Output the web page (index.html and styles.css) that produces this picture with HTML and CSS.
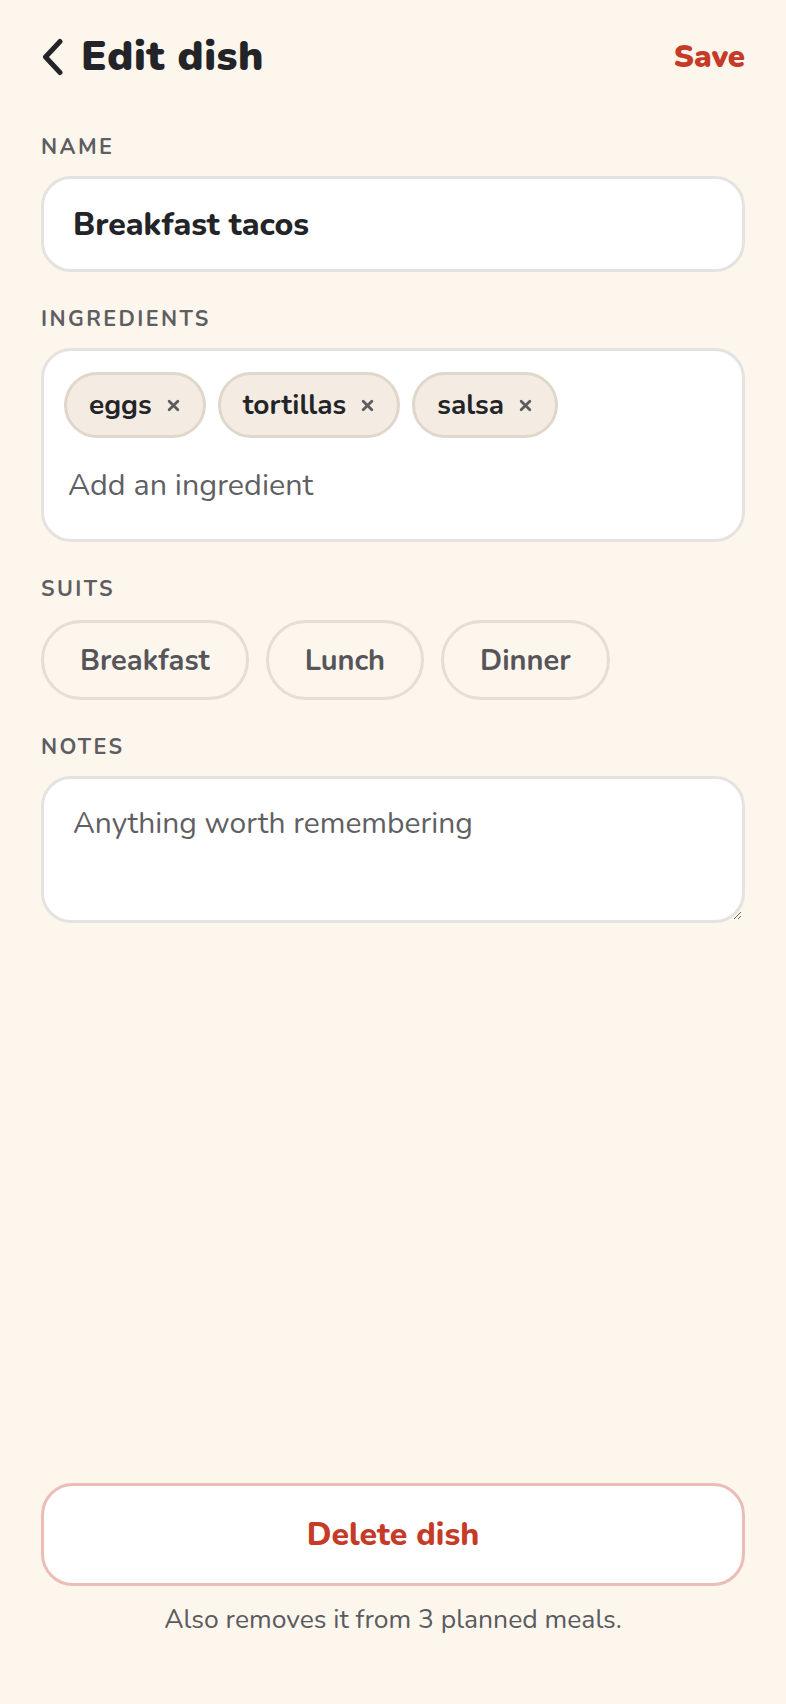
FILE: index.html
```html
<!DOCTYPE html>
<html lang="en">
<head>
<meta charset="utf-8">
<title>Edit dish</title>
<link rel="stylesheet" href="styles.css">
</head>
<body>
<div class="page">
  <header class="topbar">
    <div class="title-wrap">
      <svg class="back" width="24" height="38" viewBox="0 0 24 38" aria-hidden="true">
        <polyline points="19,3.5 4.5,19 19,34.5" fill="none" stroke="#232427" stroke-width="5" stroke-linecap="round" stroke-linejoin="round"/>
      </svg>
      <h1 class="title">Edit dish</h1>
    </div>
    <button class="save">Save</button>
  </header>

  <section class="group">
    <div class="label">NAME</div>
    <input class="text-input" type="text" value="Breakfast tacos">
  </section>

  <section class="group">
    <div class="label">INGREDIENTS</div>
    <div class="ing-box">
      <div class="chips">
        <span class="chip">eggs<svg class="x" viewBox="0 0 12 12"><path d="M2 2L10 10M10 2L2 10" stroke="#5b5b60" stroke-width="2.6" stroke-linecap="round"/></svg></span>
        <span class="chip">tortillas<svg class="x" viewBox="0 0 12 12"><path d="M2 2L10 10M10 2L2 10" stroke="#5b5b60" stroke-width="2.6" stroke-linecap="round"/></svg></span>
        <span class="chip">salsa<svg class="x" viewBox="0 0 12 12"><path d="M2 2L10 10M10 2L2 10" stroke="#5b5b60" stroke-width="2.6" stroke-linecap="round"/></svg></span>
      </div>
      <input class="ing-input" type="text" placeholder="Add an ingredient">
    </div>
  </section>

  <section class="group">
    <div class="label">SUITS</div>
    <div class="suits">
      <button class="suit">Breakfast</button>
      <button class="suit">Lunch</button>
      <button class="suit">Dinner</button>
    </div>
  </section>

  <section class="group">
    <div class="label">NOTES</div>
    <textarea class="notes" placeholder="Anything worth remembering"></textarea>
  </section>

  <div class="spacer"></div>

  <footer class="danger">
    <button class="delete">Delete dish</button>
    <p class="footnote">Also removes it from 3 planned meals.</p>
  </footer>
</div>
</body>
</html>
```

FILE: styles.css
```css
* { box-sizing: border-box; }

html, body {
  margin: 0;
  padding: 0;
  background: #fdf6ed;
}

body {
  font-family: "Nunito", "Lato", "Noto Sans", sans-serif;
  color: #232427;
}

.page {
  min-height: 1704px;
  padding: 0 41px 69px;
  display: flex;
  flex-direction: column;
}

.topbar {
  height: 112px;
  display: flex;
  align-items: center;
  justify-content: space-between;
  padding-top: 2px;
}

.title-wrap {
  display: flex;
  align-items: center;
  gap: 16px;
}

.back {
  display: block;
}

.title {
  margin: 0;
  font-size: 42px;
  font-weight: 900;
  letter-spacing: 0.6px;
  line-height: 1;
  color: #232427;
}

.save {
  border: 0;
  background: none;
  padding: 0;
  font-family: inherit;
  font-size: 31px;
  font-weight: 900;
  color: #c63b27;
}

.group {
  display: flex;
  flex-direction: column;
  margin-bottom: 35px;
}

.label {
  font-size: 21.5px;
  line-height: 24px;
  font-weight: 700;
  letter-spacing: 2.4px;
  color: #5d5d62;
  margin-bottom: 17px;
}

.group:first-of-type .label { margin-top: 23px; }

.text-input {
  height: 96px;
  border: 3px solid #e5e3e1;
  border-radius: 30px;
  background: #fff;
  padding: 0 29px;
  font-family: inherit;
  font-size: 32px;
  font-weight: 800;
  color: #232427;
  outline: none;
}

.ing-box {
  height: 194px;
  border: 3px solid #e5e3e1;
  border-radius: 30px;
  background: #fff;
  padding: 21px 20px;
  display: flex;
  flex-direction: column;
}

.chips {
  display: flex;
  flex-wrap: wrap;
  gap: 12px;
}

.chip {
  height: 66px;
  display: inline-flex;
  align-items: center;
  gap: 15px;
  padding: 0 23px 0 22px;
  border: 3px solid #e0d7cc;
  border-radius: 33px;
  background: #f4ece3;
  font-size: 28px;
  font-weight: 700;
  color: #232427;
}

.x {
  width: 13px;
  height: 13px;
  display: block;
}

.ing-input {
  margin-top: 14px;
  height: 66px;
  border: 0;
  padding: 0 0 0 4px;
  background: transparent;
  font-family: inherit;
  font-size: 30.5px;
  color: #5f5f64;
  outline: none;
}

.ing-input::placeholder { color: #5f5f64; opacity: 1; }

.suits {
  display: flex;
  gap: 17px;
  margin-top: 2px;
}

.suit {
  height: 80px;
  padding: 0 36px;
  border: 3px solid #e6ded4;
  border-radius: 40px;
  background: transparent;
  font-family: inherit;
  font-size: 29px;
  font-weight: 700;
  color: #55555a;
}

.notes {
  height: 147px;
  border: 3px solid #e5e3e1;
  border-radius: 30px;
  background: #fff;
  padding: 26px 29px;
  font-family: inherit;
  font-size: 30px;
  line-height: 38px;
  color: #232427;
  outline: none;
  resize: vertical;
}

.notes::placeholder { color: #5f5f64; opacity: 1; }

.spacer { flex: 1; }

.danger {
  display: flex;
  flex-direction: column;
  align-items: stretch;
}

.delete {
  height: 103px;
  border: 3px solid #ecbdb6;
  border-radius: 32px;
  background: #fff;
  font-family: inherit;
  font-size: 32px;
  font-weight: 800;
  color: #c63b27;
}

.footnote {
  margin: 17px 0 0;
  text-align: center;
  font-size: 26.5px;
  line-height: 32px;
  color: #5a5a5f;
}
```
